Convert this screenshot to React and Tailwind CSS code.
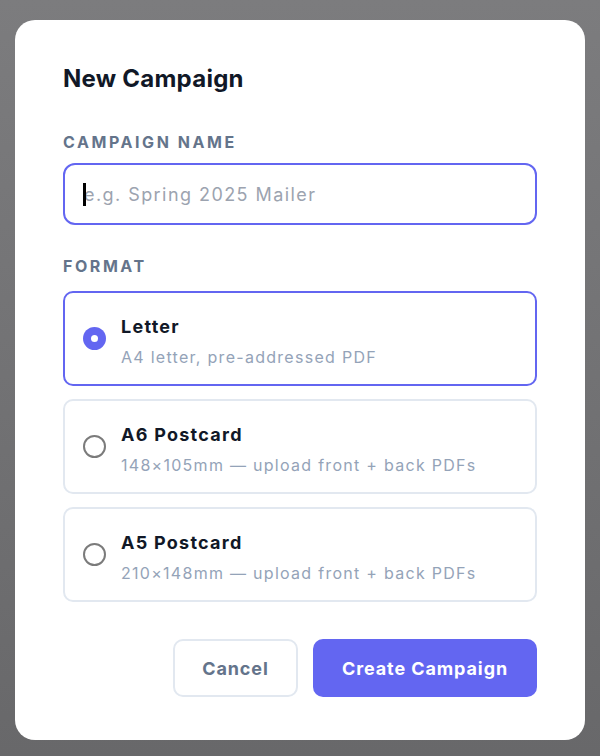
import { useState } from "react";

const FORMATS = [
  { id: "letter", title: "Letter", desc: "A4 letter, pre-addressed PDF" },
  { id: "a6", title: "A6 Postcard", desc: "148×105mm — upload front + back PDFs" },
  { id: "a5", title: "A5 Postcard", desc: "210×148mm — upload front + back PDFs" },
];

const Radio = ({ checked }) =>
  checked ? (
    <span className="flex items-center justify-center w-[23px] h-[23px] rounded-full bg-[#6366f1] shrink-0">
      <span className="w-[7px] h-[7px] rounded-full bg-white" />
    </span>
  ) : (
    <span className="w-[23px] h-[23px] rounded-full border-2 border-[#7b7b7b] bg-white shrink-0" />
  );

export default function App() {
  const [name, setName] = useState("");
  const [format, setFormat] = useState("letter");

  return (
    <div
      className="w-[600px] h-[756px] bg-gradient-to-b from-[#7c7c7e] to-[#68686a] pt-[20px] pl-[15px]"
      style={{ fontFamily: "Inter, 'Noto Sans', sans-serif" }}
    >
      <div className="w-[570px] h-[720px] bg-white rounded-[20px] px-12 pt-[43px] pb-[43px] flex flex-col">
        <h2 className="text-[24px] leading-[32px] font-bold tracking-[0.01em] text-[#111827]">New Campaign</h2>

        {/* Name */}
        <label className="mt-[37px] block text-[16px] leading-[20px] font-bold tracking-[0.16em] text-[#64748b] uppercase">
          Campaign Name
        </label>
        <div className="relative mt-[11px]">
          <input
            value={name}
            onChange={(e) => setName(e.target.value)}
            placeholder="e.g. Spring 2025 Mailer"
            className="w-full h-[62px] pl-[19px] pr-4 border-2 border-[#6366f1] rounded-[12px] text-[18px] tracking-[0.08em] text-[#111827] placeholder:text-[#9ca3af] outline-none"
          />
          <span className="absolute left-[20px] top-[20px] w-[3px] h-[23px] bg-black" />
        </div>

        {/* Format */}
        <label className="mt-[31px] block text-[16px] leading-[20px] font-bold tracking-[0.16em] text-[#64748b] uppercase">
          Format
        </label>
        <div className="mt-[15px] flex flex-col gap-[13px]">
          {FORMATS.map((f) => {
            const active = f.id === format;
            return (
              <button
                key={f.id}
                onClick={() => setFormat(f.id)}
                className={`h-[95px] flex items-center gap-[15px] pl-[18px] pr-4 rounded-[10px] border-2 text-left ${
                  active ? "border-[#6366f1]" : "border-[#e2e8f0]"
                }`}
              >
                <Radio checked={active} />
                <div className="pt-[6px]">
                  <p className="text-[18px] leading-[24px] font-bold tracking-[0.07em] text-[#111827]">{f.title}</p>
                  <p className="mt-[7px] text-[16px] leading-[22px] tracking-[0.08em] text-[#94a3b8]">{f.desc}</p>
                </div>
              </button>
            );
          })}
        </div>

        {/* Actions */}
        <div className="mt-auto flex justify-end gap-[15px]">
          <button className="w-[125px] h-[58px] rounded-[10px] border-2 border-[#e2e8f0] text-[18px] font-bold tracking-[0.05em] text-[#64748b]">
            Cancel
          </button>
          <button className="w-[224px] h-[58px] rounded-[10px] bg-[#6366f1] text-[18px] font-bold tracking-[0.05em] text-white">
            Create Campaign
          </button>
        </div>
      </div>
    </div>
  );
}
